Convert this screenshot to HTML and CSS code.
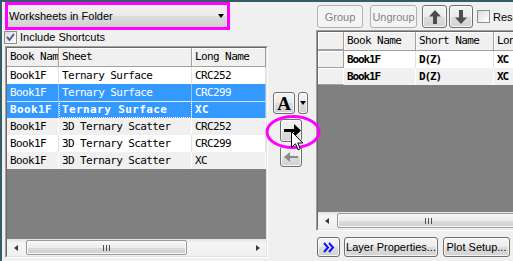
FILE: index.html
```html
<!DOCTYPE html>
<html lang="en">
<head>
<meta charset="UTF-8" />
<title>Layer Contents</title>
<link rel="stylesheet" href="styles.css">
</head>
<body>
  <div class="dialog">

    <!-- available data -->
    <section class="left">
      <div class="mark-box">
        <div class="combo">
          <span>Worksheets in Folder</span>
          <span class="caret"></span>
        </div>
      </div>
      <div class="check-row">
        <span class="check"><svg width="11" height="11" viewBox="0 0 11 11"><polyline points="2,5 4.5,8 9,2" fill="none" stroke="#4a5f8e" stroke-width="2"/></svg></span>
        Include Shortcuts
      </div>
      <div class="grid list-grid">
        <div class="grid-in">
          <div class="row head">
            <div class="c c1">Book Nam</div><div class="c c2">Sheet</div><div class="c c3">Long Name</div>
          </div>
          <div class="row">
            <div class="c c1">Book1F</div><div class="c c2">Ternary Surface</div><div class="c c3">CRC252</div>
          </div>
          <div class="row sel">
            <div class="c c1">Book1F</div><div class="c c2">Ternary Surface</div><div class="c c3">CRC299</div>
          </div>
          <div class="row sel cur">
            <div class="c c1">Book1F</div><div class="c c2 focus">Ternary Surface</div><div class="c c3">XC</div>
          </div>
          <div class="row alt">
            <div class="c c1">Book1F</div><div class="c c2">3D Ternary Scatter</div><div class="c c3">CRC252</div>
          </div>
          <div class="row">
            <div class="c c1">Book1F</div><div class="c c2">3D Ternary Scatter</div><div class="c c3">CRC299</div>
          </div>
          <div class="row alt">
            <div class="c c1">Book1F</div><div class="c c2">3D Ternary Scatter</div><div class="c c3">XC</div>
          </div>
          <div class="empty"></div>
          <div class="hscroll">
            <span class="sarrow l"></span>
            <span class="thumb"><span class="grip"></span></span>
            <span class="track"></span>
            <span class="sarrow r"></span>
          </div>
        </div>
      </div>
    </section>

    <!-- add / remove -->
    <section class="mid">
      <div class="font-tools">
        <button class="btn btn-a" type="button">A</button>
        <button class="btn btn-drop" type="button"><span class="caret"></span></button>
      </div>
      <button class="btn btn-move" type="button">
        <svg width="17" height="13" viewBox="0 0 17 13"><polygon points="0,5 10,5 10,0 17,6.5 10,13 10,8 0,8" fill="#000"/></svg>
      </button>
      <button class="btn btn-move back" type="button" disabled>
        <svg width="14" height="10" viewBox="0 0 14 10"><polygon points="14,4 6,4 6,0 0,5 6,10 6,6 14,6" fill="#8a8a8a"/></svg>
      </button>
      <svg class="ring" width="56" height="34" viewBox="0 0 56 34"><ellipse cx="28" cy="17" rx="26" ry="15.5" fill="none" stroke="#ff00ff" stroke-width="3"/></svg>
      <svg class="pointer" width="13" height="20" viewBox="0 0 13 20"><path d="M0.5 0.5 L0.5 16.5 L4.5 12.8 L7 18.8 L9.2 17.8 L6.8 12 L11.8 12 Z" fill="#fff" stroke="#000" stroke-width="1"/></svg>
    </section>

    <!-- layer contents -->
    <section class="right">
      <div class="toolbar">
        <button class="btn off w-group" type="button">Group</button>
        <button class="btn off w-ungroup" type="button">Ungroup</button>
        <button class="btn w-arrow" type="button">
          <svg width="12" height="14" viewBox="0 0 12 14"><polygon points="6,0 12,6.5 8,6.5 8,14 4,14 4,6.5 0,6.5" fill="#4d4d4d"/></svg>
        </button>
        <button class="btn w-arrow" type="button">
          <svg width="12" height="14" viewBox="0 0 12 14"><polygon points="6,14 12,7.5 8,7.5 8,0 4,0 4,7.5 0,7.5" fill="#4d4d4d"/></svg>
        </button>
        <span class="check"></span>
        <span class="res">Rescale</span>
      </div>
      <div class="grid plot-grid">
        <div class="grid-in">
          <div class="row head">
            <div class="c rh"></div><div class="c p1">Book Name</div><div class="c p2">Short Name</div><div class="c p3">Long Name</div>
          </div>
          <div class="row bold">
            <div class="c rh"></div><div class="c p1">Book1F</div><div class="c p2">D(Z)</div><div class="c p3">XC</div>
          </div>
          <div class="row alt bold">
            <div class="c rh"></div><div class="c p1">Book1F</div><div class="c p2">D(Z)</div><div class="c p3">XC</div>
          </div>
          <div class="empty"></div>
          <div class="hscroll">
            <span class="sarrow l"></span>
            <span class="thumb wide"><span class="grip"></span></span>
          </div>
        </div>
      </div>
      <div class="bottom-bar">
        <button class="btn more" type="button">
          <svg width="12" height="11" viewBox="0 0 12 11"><polyline points="1,1 5,5.5 1,10" fill="none" stroke="#0a14ff" stroke-width="2"/><polyline points="6,1 10,5.5 6,10" fill="none" stroke="#0a14ff" stroke-width="2"/></svg>
        </button>
        <button class="btn w-layer" type="button">Layer Properties...</button>
        <button class="btn w-plot" type="button">Plot Setup...</button>
      </div>
    </section>

  </div>
</body>
</html>
```

FILE: styles.css
```css
* {
  box-sizing: border-box;
}
html, body {
  margin: 0; padding: 0; height: 100%;
  overflow: hidden;
  background: #f0f0f0;
}
body {
  font-family: "Liberation Sans", Arial, sans-serif;
  font-size: 11px;
  color: #000;
}

.dialog {
  display: flex;
  height: 261px;
  border-top: 2px solid #335f63;
  border-left: 2px solid #335f63;
}

/* Generic Win7 style button */
.btn {
  display: flex;
  align-items: center;
  justify-content: center;
  flex: none;
  margin: 0;
  padding: 0 4px;
  font: inherit;
  color: #000;
  white-space: nowrap;
  border: 1px solid #707070;
  border-radius: 3px;
  background: linear-gradient(#f4f4f4, #ebebeb 50%, #dddddd 51%, #d2d2d2);
  box-shadow: inset 0 0 0 1px rgba(255, 255, 255, 0.75);
}
.btn.off {
  color: #838383;
  border-color: #adb2b5;
  background: #f4f4f4;
  box-shadow: none;
}

.caret {
  width: 0; height: 0;
  border-top: 4px solid #000;
  border-left: 3.5px solid transparent;
  border-right: 3.5px solid transparent;
}

.check {
  display: inline-flex;
  align-items: center;
  justify-content: center;
  flex: none;
  width: 13px;
  height: 13px;
  border: 1px solid #8e8f8f;
  background: linear-gradient(135deg, #d9d9d9, #f7f7f7 70%, #fff);
}

/* Left column */
.left {
  width: 266px;
  flex: none;
  padding-left: 2px;
}
.mark-box {
  width: 225px;
  height: 28px;
  margin-left: 1px;
  border: 3px solid #ff00ff;
}
.combo {
  height: 22px;
  display: flex;
  align-items: center;
  justify-content: space-between;
  padding: 0 3px 0 1px;
  background: linear-gradient(#f2f2f2, #ebebeb 50%, #dddddd 52%, #cfcfcf);
}
.check-row {
  display: flex;
  align-items: center;
  gap: 3px;
  height: 14px;
}

/* Grids */
.grid {
  flex: none;
  border: 1px solid;
  border-color: #a0a0a0 #fff #fff #a0a0a0;
}
.grid-in {
  height: 100%;
  display: flex;
  flex-direction: column;
  border: 1px solid;
  border-color: #696969 #e3e3e3 #e3e3e3 #696969;
  background: #808080;
  overflow: hidden;
}
.list-grid {
  width: 263px;
  height: 212px;
  margin: 2px 0 0 1px;
}
.plot-grid {
  width: 260px;
  height: 201px;
  margin-top: 2px;
}

.row {
  display: flex;
  flex: none;
  height: 17px;
  background: #fff;
  font-family: "DejaVu Sans Mono", "Liberation Mono", monospace;
  font-size: 11px;
  letter-spacing: -0.6px;
}
.row .c {
  flex: none;
  height: 100%;
  line-height: 17px;
  padding-left: 3px;
  border-right: 1px solid #e3e3e3;
  white-space: nowrap;
  overflow: hidden;
}
.row.alt {
  background: #f0f0f0;
}
.row.alt .c {
  border-right-color: #fff;
}
.row.sel {
  background: #3399ff;
  color: #fff;
}
.row.sel .c {
  border-right-color: #8cc4ff;
}
.row.sel + .row.sel {
  box-shadow: inset 0 1px 0 #cfe5ff;
}
.row.cur {
  font-weight: bold;
  letter-spacing: 0.4px;
}
.row .focus {
  outline: 1px dotted #fff;
  outline-offset: -1px;
}
.row.head {
  height: 19px;
  background: #f0f0f0;
  border-bottom: 1px solid #a0a0a0;
}
.row.head .c {
  line-height: 18px;
  border-right-color: #a0a0a0;
  box-shadow: inset 1px 1px 0 #fff;
}
.row.bold {
  font-weight: bold;
  letter-spacing: -1.1px;
}
.row .rh {
  width: 26px;
  background: #f0f0f0;
  border-right-color: #a0a0a0;
  border-bottom: 1px solid #a0a0a0;
  box-shadow: inset 1px 1px 0 #fff;
}

.c1 { width: 52px; }
.c2 { width: 133px; }
.c3 { flex: 1 !important; }
.p1 { width: 72px; }
.p2 { width: 78px; }
.p3 { width: 80px; }

.empty {
  flex: 1;
}

/* Horizontal scrollbar */
.hscroll {
  flex: none;
  height: 17px;
  display: flex;
  align-items: center;
  background: linear-gradient(#e3e3e3, #f5f5f5 25%, #f0f0f0);
}
.sarrow {
  display: flex;
  align-items: center;
  justify-content: center;
  flex: none;
  width: 17px;
  height: 17px;
}
.sarrow::before {
  content: "";
  border-top: 3.5px solid transparent;
  border-bottom: 3.5px solid transparent;
}
.sarrow.l::before {
  border-right: 4px solid #3b3b3b;
}
.sarrow.r::before {
  border-left: 4px solid #3b3b3b;
}
.thumb {
  display: flex;
  align-items: center;
  justify-content: center;
  flex: none;
  width: 161px;
  height: 15px;
  margin-left: 2px;
  border: 1px solid #9a9a9a;
  border-radius: 2px;
  background: linear-gradient(#f7f7f7, #ececec 50%, #dcdcdc 51%, #d0d0d0);
  box-shadow: inset 0 0 0 1px #f9f9f9;
}
.thumb.wide {
  width: 182px;
}
.grip {
  width: 7px;
  height: 6px;
  background: repeating-linear-gradient(90deg, #4f4f4f 0 1px, transparent 1px 3px);
}
.track {
  flex: 1;
}

/* Middle column */
.mid {
  width: 48px;
  flex: none;
  position: relative;
  padding-top: 90px;
}
.font-tools {
  display: flex;
  gap: 3px;
  margin-left: 5px;
}
.btn-a {
  width: 22px;
  height: 22px;
  padding: 0;
  font-family: "Liberation Serif", serif;
  font-weight: bold;
  font-size: 19px;
  line-height: 1;
}
.btn-drop {
  width: 10px;
  height: 22px;
  padding: 0;
}
.btn-move {
  width: 22px;
  height: 23px;
  margin: 5px 0 0 12px;
  padding: 0 0 0 2px;
}
.btn-move.back {
  height: 21px;
  margin-top: 4px;
  padding: 0;
}
.ring {
  position: absolute;
  left: -3px;
  top: 113px;
}
.pointer {
  position: absolute;
  left: 23px;
  top: 129px;
}

/* Right column */
.right {
  flex: 1;
  min-width: 0;
  overflow: hidden;
  padding-top: 3px;
}
.toolbar {
  display: flex;
  align-items: center;
  height: 23px;
  padding-left: 1px;
  white-space: nowrap;
}
.w-group {
  width: 46px;
  height: 23px;
}
.w-ungroup {
  width: 47px;
  height: 23px;
  margin-left: 7px;
}
.w-arrow {
  width: 25px;
  height: 23px;
  margin-left: 5px;
  padding: 0;
}
.w-arrow + .w-arrow {
  width: 24px;
  margin-left: 2px;
}
.toolbar .check {
  margin-left: 4px;
}
.res {
  margin-left: 3px;
}

.bottom-bar {
  display: flex;
  margin-top: 6px;
  padding-left: 1px;
}
.bottom-bar .btn {
  height: 20px;
}
.more {
  width: 23px;
  padding: 0;
}
.w-layer {
  width: 94px;
  margin-left: 4px;
}
.w-plot {
  width: 67px;
  margin-left: 5px;
}
```
